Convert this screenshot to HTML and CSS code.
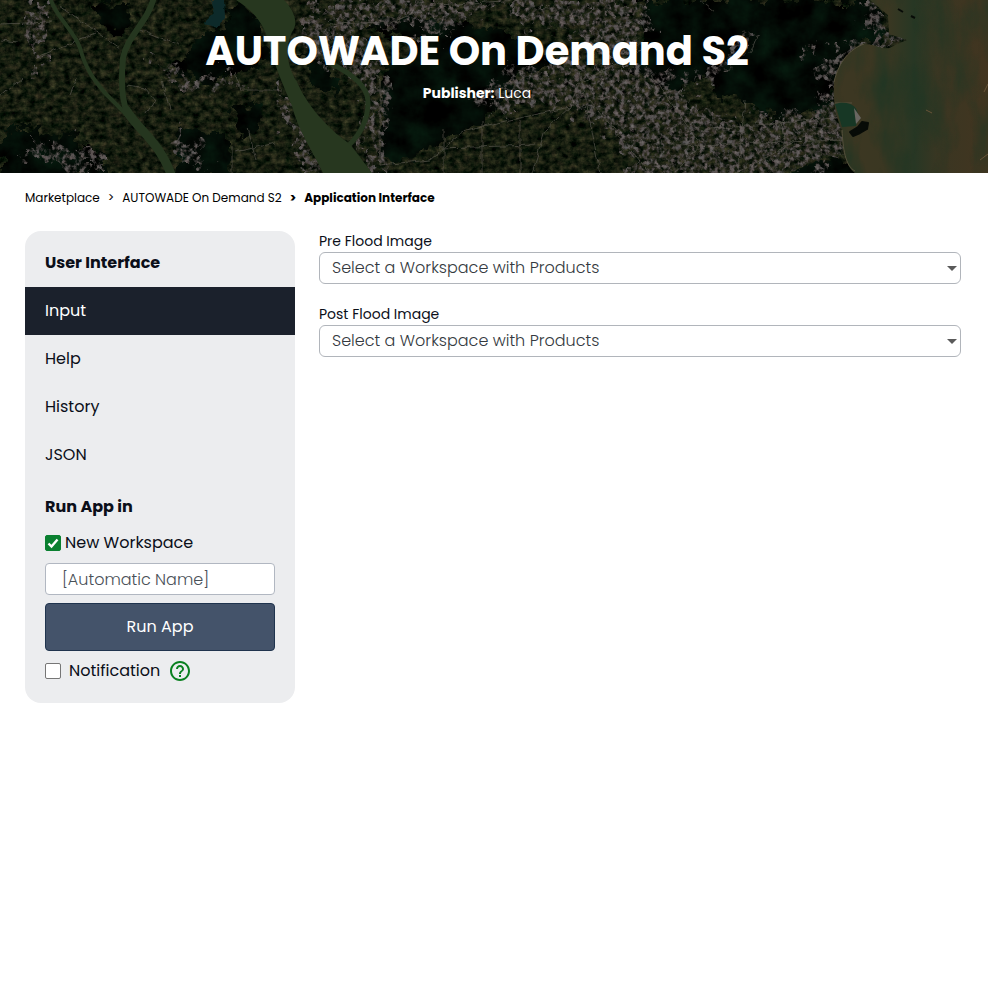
FILE: index.html
```html
<!DOCTYPE html>
<html lang="en">
<head>
<meta charset="utf-8">
<meta name="viewport" content="width=device-width, initial-scale=1">
<title>AUTOWADE On Demand S2</title>
<link rel="stylesheet" href="styles.css">
</head>
<body>
<header class="hero">
  <svg class="hero-map" viewBox="0 0 988 173" preserveAspectRatio="xMidYMid slice" aria-hidden="true">
    <defs>
      <filter id="fields" x="0" y="0" width="100%" height="100%" color-interpolation-filters="sRGB">
        <feTurbulence type="fractalNoise" baseFrequency="0.14 0.17" numOctaves="4" seed="8"/>
        <feColorMatrix values="0.42 0.08 0 0 -0.16  0.33 0.12 0 0 -0.11  0.24 0.06 0 0 -0.09  0 0 0 0 1"/>
      </filter>
      <filter id="town" x="-5%" y="-5%" width="110%" height="110%" color-interpolation-filters="sRGB">
        <feTurbulence type="fractalNoise" baseFrequency="0.06" numOctaves="4" seed="4" result="warp"/>
        <feDisplacementMap in="SourceGraphic" in2="warp" scale="46" xChannelSelector="R" yChannelSelector="G" result="shape"/>
        <feTurbulence type="fractalNoise" baseFrequency="0.2" numOctaves="4" seed="21"/>
        <feColorMatrix values="0.36 0.1 0 0 0.05  0.38 0.05 0 0 0.04  0.38 0.04 0 0 0.04  3.5 0 2 0 -2.35"/>
        <feComposite in2="shape" operator="in"/>
      </filter>
      <filter id="wood" x="-5%" y="-5%" width="110%" height="110%" color-interpolation-filters="sRGB">
        <feTurbulence type="fractalNoise" baseFrequency="0.07" numOctaves="4" seed="12" result="warp"/>
        <feDisplacementMap in="SourceGraphic" in2="warp" scale="30" xChannelSelector="R" yChannelSelector="G" result="shape"/>
        <feTurbulence type="fractalNoise" baseFrequency="0.04" numOctaves="5" seed="3"/>
        <feColorMatrix values="0 0.04 0 0 -0.01  0 0.18 0 0 -0.05  0 0.1 0 0 -0.03  0 0 0 0 1"/>
        <feComposite in2="shape" operator="in"/>
      </filter>
      <filter id="swirl" x="0" y="0" width="100%" height="100%" color-interpolation-filters="sRGB">
        <feTurbulence type="fractalNoise" baseFrequency="0.04 0.015" numOctaves="5" seed="6"/>
        <feColorMatrix values="0 0 0 0 0.1  0 0 0 0 0.21  0 0 0 0 0.14  1.3 0 0 0 -0.5"/>
        <feComposite in2="SourceGraphic" operator="in"/>
      </filter>
      <filter id="rough" x="-5%" y="-5%" width="110%" height="110%">
        <feTurbulence type="fractalNoise" baseFrequency="0.12" numOctaves="2" seed="2"/>
        <feDisplacementMap in="SourceGraphic" scale="5" xChannelSelector="R" yChannelSelector="G"/>
      </filter>
      <linearGradient id="sea" x1="0" x2="1" y1="0" y2="0">
        <stop offset="0" stop-color="#3d3722"/>
        <stop offset=".35" stop-color="#3a3722"/>
        <stop offset=".52" stop-color="#273724"/>
        <stop offset=".68" stop-color="#3a3622"/>
        <stop offset="1" stop-color="#423520"/>
      </linearGradient>
      <pattern id="plots" width="7" height="6" patternUnits="userSpaceOnUse" patternTransform="rotate(-6)">
        <path d="M0 .5H7M.5 0V6" stroke="#080f08" stroke-width="1"/>
      </pattern>
    </defs>
    <rect width="988" height="173" filter="url(#fields)"/>
    <rect width="988" height="173" fill="url(#plots)" opacity=".25"/>

    <g filter="url(#wood)">
      <path d="M175 72L198 40L222 25L238 0H248L264 35L268 60L240 72L215 84L190 78Z"/>
      <path d="M350 24L440 18L515 35L555 58L515 80L500 108L462 130L430 150L398 166L383 160L380 112L386 70L420 38Z"/>
      <path d="M640 0H872L885 32L855 50L838 82L836 102L790 118L740 104L700 76L665 90L625 70L645 38Z"/>
      <path d="M0 126L40 130L75 138L108 160L110 178H0Z"/>
      <path d="M178 128L232 140L228 178H178Z"/>
      <path d="M228 112L258 100L262 130L242 140Z"/>
      <path d="M90 2L130 6L124 36L105 26Z"/>
      <path d="M800 164L856 158L862 180H790Z"/>
      <path d="M296 50L330 60L335 98L310 84Z"/>
    </g>

    <g filter="url(#town)">
      <path d="M28 0H58L42 22L46 78L38 70L27 30Z"/>
      <path d="M145 56L175 70L225 76L238 74L238 84L195 88L160 74Z"/>
      <path d="M25 145L95 148L108 173H62Z"/>
      <path d="M170 128L188 140L210 160L206 178L184 160Z"/>
      <path d="M276 90L292 98L318 150L325 178L308 178L285 126Z"/>
      <path d="M310 0H650L646 50L610 62L576 32L530 30L505 8L460 18L440 42L402 20L345 30L330 18Z"/>
      <path d="M300 20L345 24L385 70L384 178L364 162L370 110L345 70L310 55Z"/>
      <path d="M495 75L570 60L650 70L678 80L700 110L742 120L838 105L846 160L810 170L760 180H640L610 130L570 108L490 112L470 102Z"/>
      <path d="M805 50L836 54L864 44L902 42L898 50L862 48L840 76L834 100L808 96L833 80Z"/>
      <path d="M855 0H876L892 34L905 40L880 44Z"/>
      <path d="M700 72L725 52L745 30L752 34L732 66L706 94Z"/>
    </g>

    <g fill="none" stroke="#5c5951" stroke-width="1" opacity=".65" filter="url(#rough)">
      <path d="M40 56L95 33M0 96L22 78M78 76L70 95M127 85L145 88L155 100L146 114M137 28L180 45M235 72L240 90H282M235 152L276 143M232 145V173M162 80L170 110M248 128L256 160M0 40L18 42M60 6L120 48M0 24L52 22"/>
      <path d="M330 24L392 22L438 5L520 0M365 62L380 80V165L430 160L465 130L520 118L570 107L578 84L620 62L650 45M570 107L545 130L532 173M444 130V173M482 122V173M520 120V173M440 148L535 145M590 100L650 173M650 72L700 145L675 173M700 0L715 12M757 36L750 54M580 70L600 173"/>
      <path d="M735 173L752 165L795 142M745 100L738 173M780 116L790 173M700 130L835 118M676 146L842 140"/>
    </g>

    <g fill="none" stroke="#25361f" stroke-linejoin="round" stroke-linecap="round">
      <path stroke-width="4" d="M50 -3C54 15 74 30 80 48C86 70 94 80 105 93L126 114"/>
      <path stroke-width="6" d="M154 -3C148 22 127 36 123 58C121 80 121 98 127 112"/>
      <path stroke-width="9" d="M126 110C140 132 160 142 172 177"/>
      <path stroke-width="5" d="M330 63C352 74 368 86 368 102C368 120 360 134 350 144"/>
    </g>
    <path fill="#27371f" d="M236 0H284C292 8 300 22 292 32C284 50 288 68 297 82C308 108 332 132 350 144L372 173H323C313 152 298 130 292 106C282 82 276 70 270 46C264 22 252 10 236 0Z"/>
    <path fill="#0d2b2b" d="M210 0H224L225 18L218 28L204 24L214 14Z" filter="url(#rough)"/>

    <g>
      <path fill="url(#sea)" d="M870 0H988V173H855C845 166 843 148 842 130C835 115 833 100 834 82C839 61 850 49 864 44C878 44 885 53 895 45L907 40L889 34L888 15Z"/>
      <path filter="url(#swirl)" d="M870 0H988V173H855C845 166 843 148 842 130C835 115 833 100 834 82C839 61 850 49 864 44C878 44 885 53 895 45L907 40L889 34L888 15Z"/>
      <path fill="none" stroke="#55503c" d="M864 44C850 49 839 61 834 82M842 130C843 148 845 166 855 171M835 103H852"/>
      <path fill="#173725" d="M835 104C850 100 858 107 858 116L856 126L842 127Z"/>
      <path fill="#696661" d="M854 108L861 118L856 124Z"/>
      <path fill="#070b07" stroke="#070b07" stroke-width="2" stroke-linejoin="round" d="M850 132L858 127L862 122L868 123L867 129L860 133L853 136ZM898 9L903 12M911 16L915 18"/>
      <path stroke="#675438" fill="none" d="M984 92L988 84M980 160L988 154M926 110L932 113"/>
    </g>
  </svg>
  <div class="hero-text">
    <h1 class="hero-title">AUTOWADE On Demand S2</h1>
    <p class="publisher"><strong>Publisher:</strong> Luca</p>
  </div>
</header>

<main class="page">
  <nav class="crumbs" aria-label="Breadcrumb">
    <a href="#">Marketplace</a>
    <span>&gt;</span>
    <a href="#">AUTOWADE On Demand S2</a>
    <strong>&gt;</strong>
    <strong>Application Interface</strong>
  </nav>

  <div class="columns">
    <aside class="panel">
      <h2 class="panel-title">User Interface</h2>
      <nav class="menu">
        <a class="menu-item active" href="#">Input</a>
        <a class="menu-item" href="#">Help</a>
        <a class="menu-item" href="#">History</a>
        <a class="menu-item" href="#">JSON</a>
      </nav>
      <form class="run">
        <h2 class="run-title">Run App in</h2>
        <div class="check-row">
          <span class="check-box">
            <input class="check" type="checkbox" id="new-workspace" checked>
            <svg class="tick" viewBox="0 0 16 16" aria-hidden="true"><path d="M3.500 8.500L6.500 11.500L12.500 4.500" fill="none" stroke="#fff" stroke-width="2.400"/></svg>
          </span>
          <label for="new-workspace">New Workspace</label>
        </div>
        <input class="name" type="text" placeholder="[Automatic Name]" aria-label="Workspace name">
        <button class="run-button" type="button">Run App</button>
        <div class="check-row notify">
          <input class="check" type="checkbox" id="notification">
          <label for="notification">Notification</label>
          <svg class="help" viewBox="0 0 24 24" aria-hidden="true"><path fill="currentColor" d="M11 18h2v-2h-2v2zm1-16C6.480 2 2 6.480 2 12s4.480 10 10 10 10-4.480 10-10S17.520 2 12 2zm0 18c-4.410 0-8-3.590-8-8s3.590-8 8-8 8 3.590 8 8-3.590 8-8 8zm0-14c-2.210 0-4 1.790-4 4h2c0-1.100.9-2 2-2s2 .9 2 2c0 2-3 1.750-3 5h2c0-2.250 3-2.500 3-5 0-2.210-1.790-4-4-4z"/></svg>
        </div>
      </form>
    </aside>

    <form class="fields">
      <div class="field">
        <label for="pre">Pre Flood Image</label>
        <div class="select-wrap"><select id="pre"><option>Select a Workspace with Products</option></select></div>
      </div>
      <div class="field">
        <label for="post">Post Flood Image</label>
        <div class="select-wrap"><select id="post"><option>Select a Workspace with Products</option></select></div>
      </div>
    </form>
  </div>
</main>
</body>
</html>
```
FILE: styles.css
```css
* {
  box-sizing: border-box;
}

body {
  margin: 0;
  background: #fff;
  color: #0b0f19;
  font: 400 16px/24px Poppins, Inter, sans-serif;
}

h1, h2, p {
  margin: 0;
}

a {
  color: inherit;
  text-decoration: none;
}

.hero {
  position: relative;
  overflow: hidden;
  background: #10170e;
  color: #fff;
  text-align: center;
}

.hero-map {
  position: absolute;
  inset: 0;
  width: 100%;
  height: 100%;
}

.hero-text {
  position: relative;
  padding: 26px 34px 68px 0;
}

.hero-title {
  font-size: 40px;
  line-height: 50px;
  font-weight: 700;
  padding-bottom: 5px;
}

.publisher {
  font-size: 14px;
}

.publisher strong {
  font-weight: 700;
}

.page {
  padding: 13px 27px 24px 25px;
}

.crumbs {
  display: flex;
  gap: 8px;
  font-size: 12px;
  color: #000;
}

.columns {
  display: flex;
  align-items: flex-start;
  gap: 24px;
  padding-top: 21px;
}

.panel {
  flex: 0 0 270px;
  padding: 16px 0 20px;
  border-radius: 16px;
  background: #ecedef;
}

.panel-title,
.run-title {
  font-size: 16px;
  line-height: 24px;
  font-weight: 700;
}

.panel-title {
  padding: 4px 20px 12px;
}

.menu-item {
  display: block;
  padding: 12px 20px;
}

.menu-item.active {
  background: #1b212c;
  color: #fff;
}

.run {
  padding: 16px 20px 0;
}

.check-row {
  display: flex;
  align-items: center;
  gap: 4px;
  padding: 12px 0 8px;
}

.notify {
  gap: 8px;
  padding: 8px 0 0;
}

.check-box {
  position: relative;
  flex: none;
  width: 16px;
  height: 16px;
}

.check {
  flex: none;
  appearance: none;
  display: block;
  width: 16px;
  height: 16px;
  margin: 0;
  border: 1px solid #767676;
  border-radius: 2px;
  background: #fff;
}

.check:checked {
  border-color: #0a8030;
  background: #0a8030;
}

.tick {
  position: absolute;
  inset: 0;
  visibility: hidden;
  pointer-events: none;
}

.check:checked + .tick {
  visibility: visible;
}

.name {
  display: block;
  width: 100%;
  height: 32px;
  padding: 0 16px;
  border: 1px solid #b1b7c1;
  border-radius: 4px;
  background: #fff;
  font: inherit;
  font-weight: 300;
}

.name::placeholder {
  color: #495057;
  opacity: 1;
}

.run-button {
  display: block;
  width: 100%;
  height: 48px;
  margin-top: 8px;
  border: 1px solid #20344e;
  border-radius: 4px;
  background: #44536a;
  color: #fff;
  font: inherit;
}

.help {
  width: 24px;
  height: 24px;
  color: #0a8020;
}

.fields {
  flex: 1;
  min-width: 0;
}

.field {
  margin-bottom: 20px;
}

.field label {
  display: block;
  font-size: 14px;
  line-height: 21px;
}

.select-wrap {
  position: relative;
}

.select-wrap::after {
  content: "";
  position: absolute;
  right: 4px;
  top: 14px;
  border: solid transparent;
  border-width: 5px 5px 0;
  border-top-color: #5a5a5a;
  pointer-events: none;
}

select {
  appearance: none;
  display: block;
  width: 100%;
  height: 32px;
  padding: 0 24px 0 12px;
  border: 1px solid #b1b5bb;
  border-radius: 6px;
  background: #fff;
  color: #343a40;
  font: inherit;
  font-weight: 300;
}
```
